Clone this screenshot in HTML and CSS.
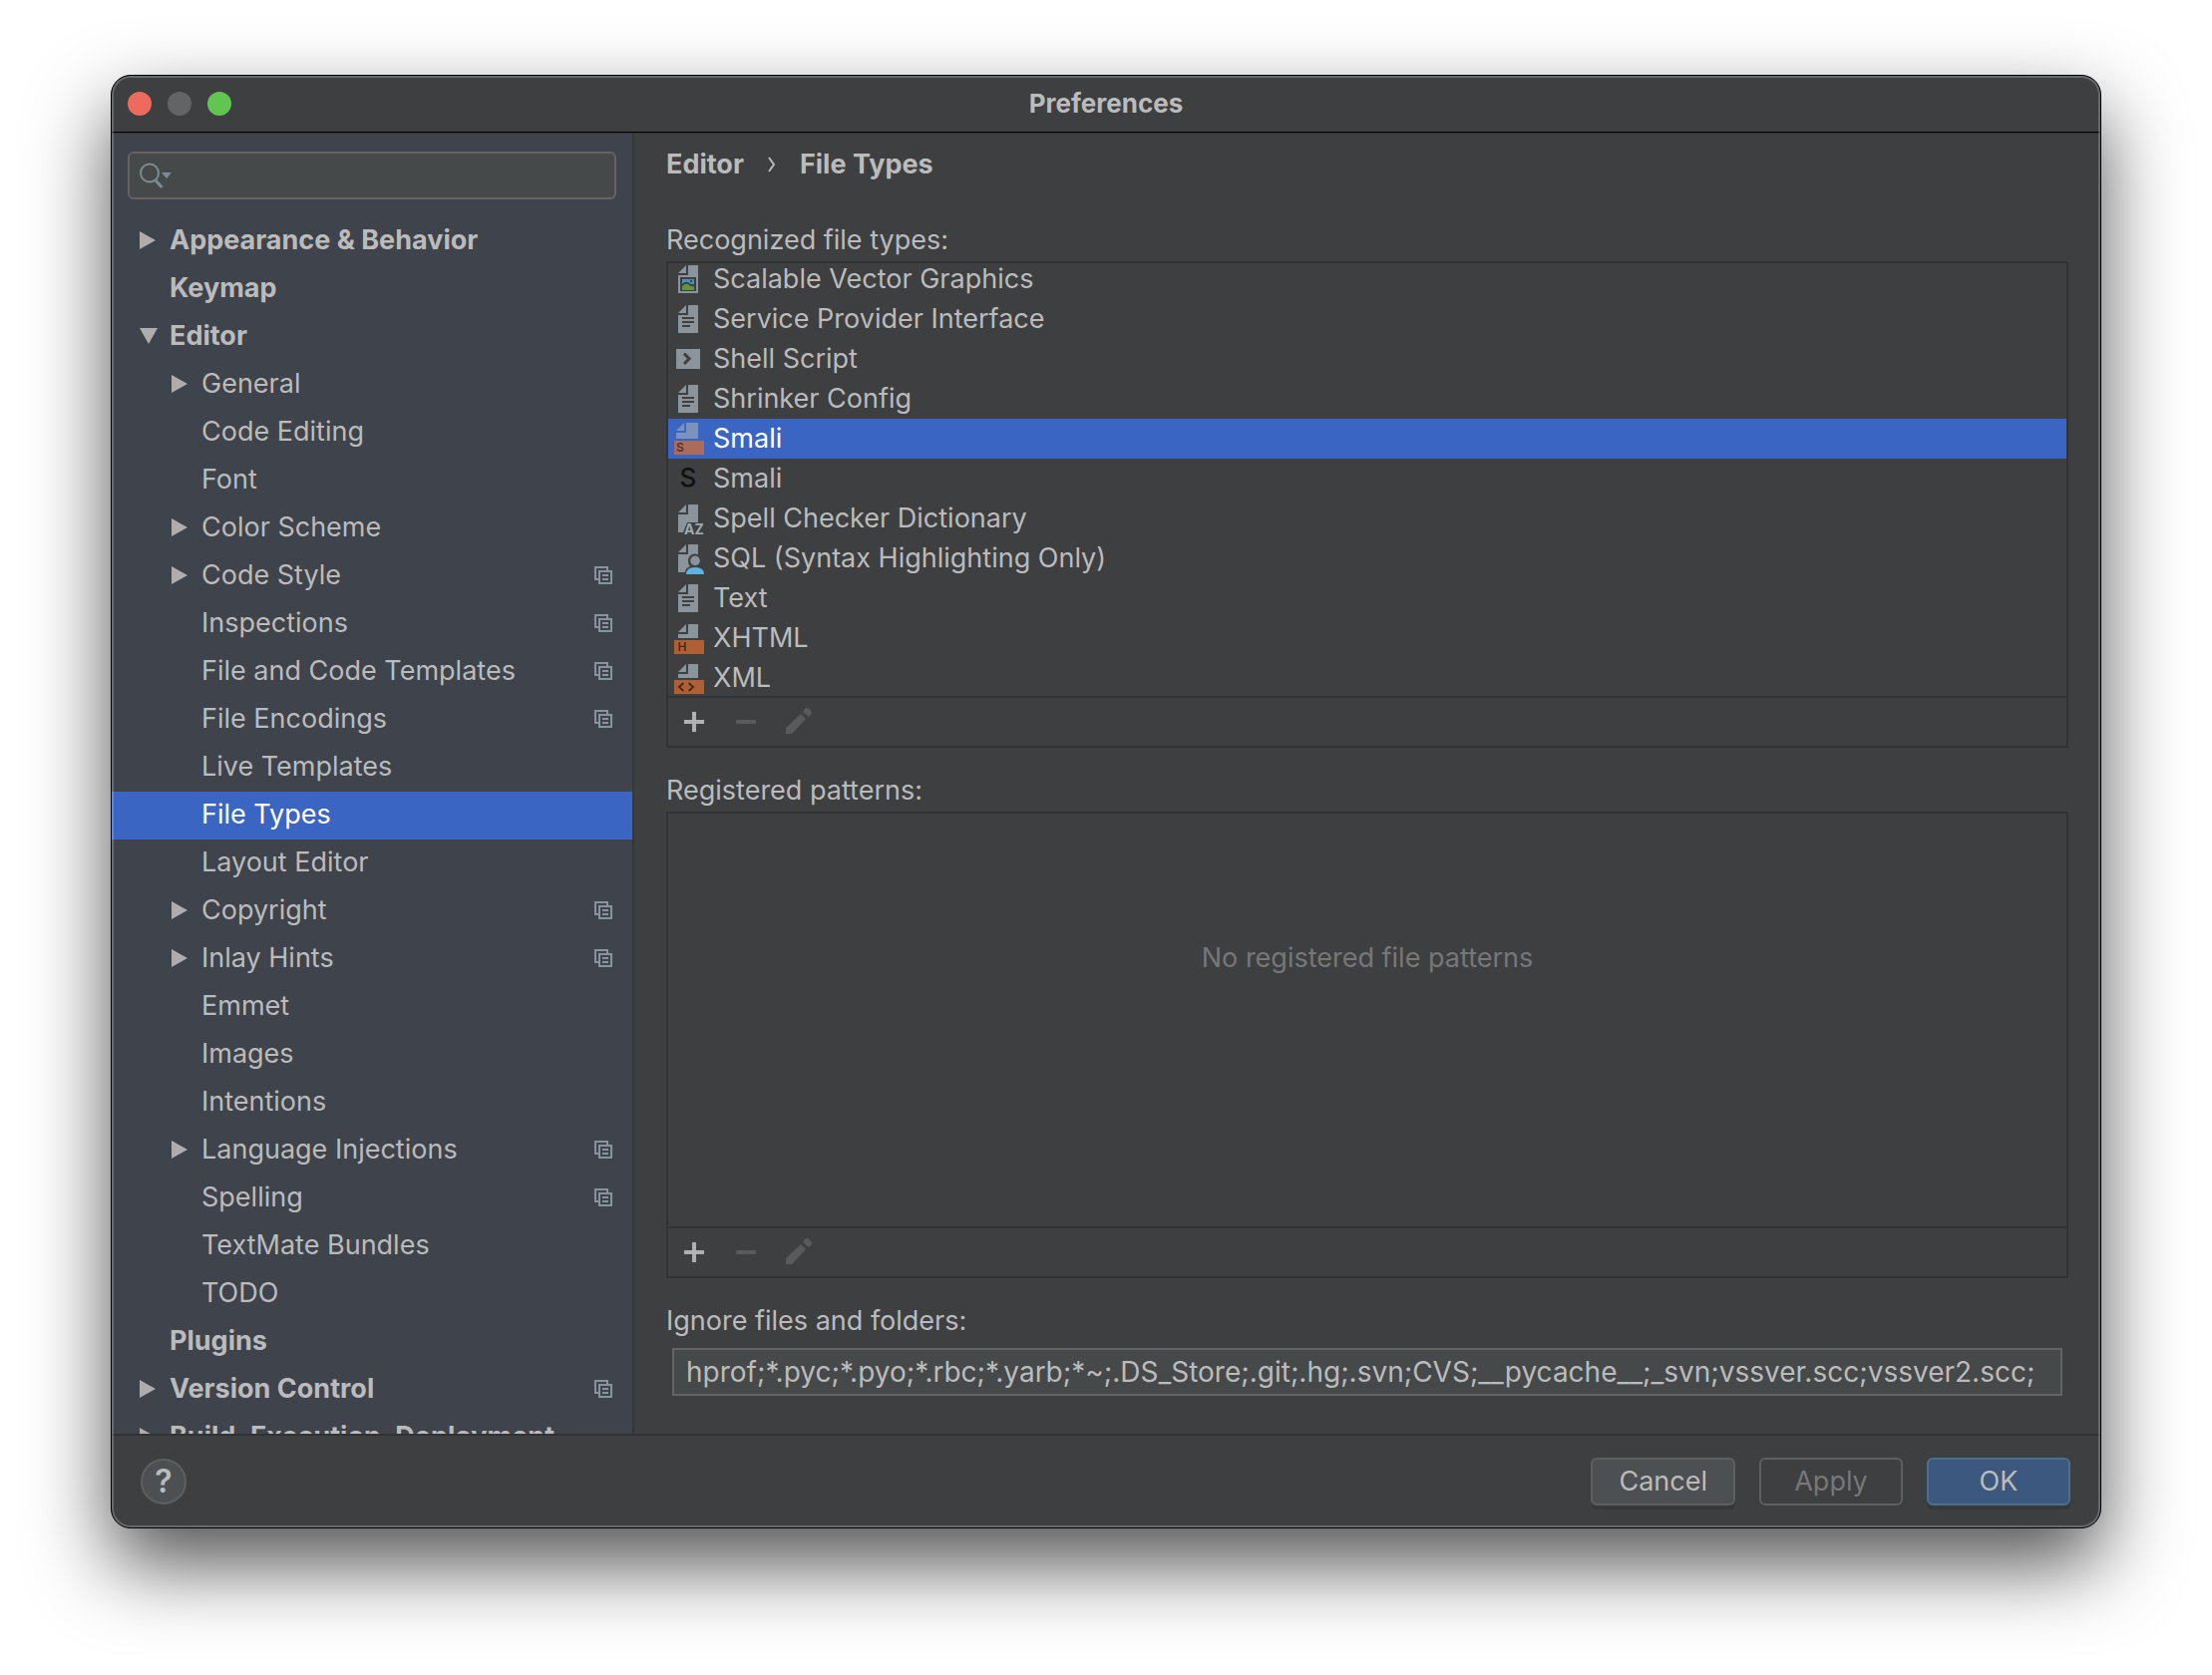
FILE: index.html
```html
<!DOCTYPE html>
<html lang="en">
<head>
<meta charset="utf-8">
<title>Preferences</title>
<link rel="stylesheet" href="styles.css">
</head>
<body>
<svg class="sprite" aria-hidden="true">
  <symbol id="right" viewBox="0 0 16 18"><path d="M0 0L16 9L0 18Z"/></symbol>
  <symbol id="down" viewBox="0 0 18 16"><path d="M0 0H18L9 16Z"/></symbol>
  <symbol id="project" viewBox="0 0 18 18"><path fill-rule="evenodd" d="M0 0H14V4H12V2H2V12H4V14H0ZM4 4H18V18H4ZM6 6V16H16V6ZM8 8H14V10H8ZM8 12H14V14H8Z"/></symbol>
  <symbol id="text" viewBox="0 0 16 16"><path fill-rule="evenodd" d="M7 1L3 5H7ZM8 1V6H3V15H13V1ZM5 7H11V8H5ZM5 9H11V10H5ZM5 11H9V12H5Z"/></symbol>
  <symbol id="half" viewBox="0 0 16 16"><path d="M7 1L3 5H7ZM8 1V6H3V8H13V1Z"/></symbol>
  <symbol id="plus" viewBox="0 0 32 32"><path d="M14 6H18V14H26V18H18V26H14V18H6V14H14Z"/></symbol>
  <symbol id="minus" viewBox="0 0 32 32"><path d="M6 14H26V18H6Z"/></symbol>
  <symbol id="pencil" viewBox="0 0 32 32"><path d="M4 22L19 8L24 13L10 28H4ZM21 6L23 3Q25 1 27 3L29 5Q31 7 29 9L27 11Z"/></symbol>
</svg>

<div class="window">
  <header class="titlebar">
    <div class="lights">
      <button class="light close" aria-label="Close"></button>
      <button class="light minimize" aria-label="Minimize" disabled></button>
      <button class="light zoom" aria-label="Zoom"></button>
    </div>
    <h1 class="title">Preferences</h1>
  </header>

  <div class="content">
    <aside class="sidebar">
      <label class="search">
        <svg class="search-icon" width="34" height="26" viewBox="0 0 34 26" aria-hidden="true"><circle cx="10" cy="10.500" r="9" fill="none" stroke="#7f8b91" stroke-width="2"/><path d="M16 18L22.500 25" stroke="#7f8b91" stroke-width="3"/><path d="M22 10H32L27 16Z" fill="#7f8b91"/></svg>
        <input type="search" aria-label="Search preferences">
      </label>
      <nav class="tree" aria-label="Preference pages">
        <a class="row top" href="#"><span class="arrow"><svg width="16" height="18"><use href="#right"/></svg></span>Appearance &amp; Behavior</a>
        <a class="row top" href="#"><span class="arrow"></span>Keymap</a>
        <a class="row top" href="#"><span class="arrow open"><svg width="18" height="16"><use href="#down"/></svg></span>Editor</a>
        <a class="row" href="#"><span class="arrow"><svg width="16" height="18"><use href="#right"/></svg></span>General</a>
        <a class="row" href="#"><span class="arrow"></span>Code Editing</a>
        <a class="row" href="#"><span class="arrow"></span>Font</a>
        <a class="row" href="#"><span class="arrow"><svg width="16" height="18"><use href="#right"/></svg></span>Color Scheme</a>
        <a class="row" href="#"><span class="arrow"><svg width="16" height="18"><use href="#right"/></svg></span>Code Style<svg class="project" width="18" height="18"><use href="#project"/></svg></a>
        <a class="row" href="#"><span class="arrow"></span>Inspections<svg class="project" width="18" height="18"><use href="#project"/></svg></a>
        <a class="row" href="#"><span class="arrow"></span>File and Code Templates<svg class="project" width="18" height="18"><use href="#project"/></svg></a>
        <a class="row" href="#"><span class="arrow"></span>File Encodings<svg class="project" width="18" height="18"><use href="#project"/></svg></a>
        <a class="row" href="#"><span class="arrow"></span>Live Templates</a>
        <a class="row selected" href="#" aria-current="page"><span class="arrow"></span>File Types</a>
        <a class="row" href="#"><span class="arrow"></span>Layout Editor</a>
        <a class="row" href="#"><span class="arrow"><svg width="16" height="18"><use href="#right"/></svg></span>Copyright<svg class="project" width="18" height="18"><use href="#project"/></svg></a>
        <a class="row" href="#"><span class="arrow"><svg width="16" height="18"><use href="#right"/></svg></span>Inlay Hints<svg class="project" width="18" height="18"><use href="#project"/></svg></a>
        <a class="row" href="#"><span class="arrow"></span>Emmet</a>
        <a class="row" href="#"><span class="arrow"></span>Images</a>
        <a class="row" href="#"><span class="arrow"></span>Intentions</a>
        <a class="row" href="#"><span class="arrow"><svg width="16" height="18"><use href="#right"/></svg></span>Language Injections<svg class="project" width="18" height="18"><use href="#project"/></svg></a>
        <a class="row" href="#"><span class="arrow"></span>Spelling<svg class="project" width="18" height="18"><use href="#project"/></svg></a>
        <a class="row" href="#"><span class="arrow"></span>TextMate Bundles</a>
        <a class="row" href="#"><span class="arrow"></span>TODO</a>
        <a class="row top" href="#"><span class="arrow"></span>Plugins</a>
        <a class="row top" href="#"><span class="arrow"><svg width="16" height="18"><use href="#right"/></svg></span>Version Control<svg class="project" width="18" height="18"><use href="#project"/></svg></a>
        <a class="row top" href="#"><span class="arrow"><svg width="16" height="18"><use href="#right"/></svg></span>Build, Execution, Deployment</a>
      </nav>
    </aside>

    <main class="page">
      <h2 class="breadcrumb"><span>Editor</span><svg width="8" height="16" viewBox="0 0 8 16" aria-hidden="true"><path d="M1 1L6 8L1 15" fill="none" stroke="#bbb" stroke-width="2"/></svg><span>File Types</span></h2>

      <h3 class="label">Recognized file types:</h3>
      <section class="panel">
        <div class="list">
          <ul class="types">
            <li><svg class="icon" viewBox="0 0 16 16"><path fill-rule="evenodd" d="M7 1L3 5H7ZM8 1V6H3V15H13V1ZM4 7H12V14H4Z"/><path fill="#4a8fb5" d="M5 8H11V13H5Z"/><path fill="#3d3f41" d="M5 10.500Q7 8.500 8.500 10Q10 11 11 10.500V12H5Z"/><path fill="#629440" d="M5 11.500Q7 9.500 8.500 11Q10 12 11 11.500V13.500H5Z"/><rect fill="#3d3f41" x="9" y="8.500" width="1" height="1"/></svg>Scalable Vector Graphics</li>
            <li><svg class="icon"><use href="#text"/></svg>Service Provider Interface</li>
            <li><svg class="icon" viewBox="0 0 16 16"><path d="M2 3H14V13H2Z"/><path d="M6 5.300L8.500 7.900L6 10.500" fill="none" stroke="#3d3f41" stroke-width="1.500"/></svg>Shell Script</li>
            <li><svg class="icon"><use href="#text"/></svg>Shrinker Config</li>
            <li class="selected"><svg class="icon" viewBox="0 0 16 16"><path fill="#7b93bc" d="M6 0L2 4H6ZM7 0V5H2V8H13V0Z"/><path fill="#ad6c5a" d="M1 9H16V16H1Z"/><text class="badge" x="2" y="14.700" fill="#4b3039">S</text></svg>Smali</li>
            <li><svg class="icon" viewBox="0 0 16 16"><text class="letter" x="8" y="12" fill="#111">S</text></svg>Smali</li>
            <li><svg class="icon" viewBox="0 0 16 16"><path d="M7 1L3 5H7ZM8 1V6H3V15H5.500L7.500 10H13V1Z"/><text class="az" x="6" y="16">AZ</text></svg>Spell Checker Dictionary</li>
            <li><svg class="icon" viewBox="0 0 16 16"><path d="M7 1L3 5H7ZM8 1V6H3V15H6.500Q6.500 13 9 12Q8 11 8 9.200A3.500 3.500 0 0 1 13 6.100V1Z"/><circle cx="11.500" cy="9.200" r="2.400"/><path fill="#5fb2de" d="M7 16Q7 12.500 11.500 12.500T16 16Z"/></svg>SQL (Syntax Highlighting Only)</li>
            <li><svg class="icon"><use href="#text"/></svg>Text</li>
            <li><svg class="icon" viewBox="0 0 16 16"><use href="#half"/><path fill="#b05f34" d="M1 9H16V16H1Z"/><text class="badge" x="2.700" y="14.700" fill="#432c22">H</text></svg>XHTML</li>
            <li><svg class="icon" viewBox="0 0 16 16"><use href="#half"/><path fill="#b05f34" d="M1 9H16V16H1Z"/><path d="M5.700 10.500L3.500 12.500L5.700 14.500M8.300 10.500L10.500 12.500L8.300 14.500" fill="none" stroke="#432c22"/></svg>XML</li>
          </ul>
        </div>
        <div class="tools">
          <button aria-label="Add file type"><svg width="32" height="32"><use href="#plus"/></svg></button>
          <button aria-label="Remove file type" disabled><svg width="32" height="32"><use href="#minus"/></svg></button>
          <button aria-label="Edit file type" disabled><svg width="32" height="32"><use href="#pencil"/></svg></button>
        </div>
      </section>

      <h3 class="label">Registered patterns:</h3>
      <section class="panel patterns">
        <p class="empty">No registered file patterns</p>
        <div class="tools">
          <button aria-label="Add pattern"><svg width="32" height="32"><use href="#plus"/></svg></button>
          <button aria-label="Remove pattern" disabled><svg width="32" height="32"><use href="#minus"/></svg></button>
          <button aria-label="Edit pattern" disabled><svg width="32" height="32"><use href="#pencil"/></svg></button>
        </div>
      </section>

      <label class="label" for="ignore">Ignore files and folders:</label>
      <input class="ignore" id="ignore" type="text" value="hprof;*.pyc;*.pyo;*.rbc;*.yarb;*~;.DS_Store;.git;.hg;.svn;CVS;__pycache__;_svn;vssver.scc;vssver2.scc;">
    </main>
  </div>

  <footer class="footer">
    <button class="help" aria-label="Help">?</button>
    <button class="button">Cancel</button>
    <button class="button" disabled>Apply</button>
    <button class="button primary">OK</button>
  </footer>
</div>
</body>
</html>
```
FILE: styles.css
```css
* {
  box-sizing: border-box;
}

body {
  margin: 0;
  height: 100vh;
  padding: 75px 111px 147px;
  background: #fff;
  color: #bbb;
  font: 27px/32px Inter, "Liberation Sans", sans-serif;
}

h1, h2, h3, p, ul {
  margin: 0;
  padding: 0;
  font-size: inherit;
  font-weight: inherit;
  list-style: none;
}

button, input {
  margin: 0;
  padding: 0;
  border: 0;
  background: none;
  color: inherit;
  font: inherit;
}

svg {
  flex: none;
  fill: currentColor;
}

.sprite {
  display: none;
}

.window {
  position: relative;
  display: flex;
  flex-direction: column;
  height: 100%;
  overflow: hidden;
  border: 1px solid #000;
  border-radius: 20px;
  background: #3d3f41;
  box-shadow: 0 36px 80px rgba(0, 0, 0, 0.68);
}

/* Light bevel that runs just inside the window frame */
.window::after {
  content: "";
  position: absolute;
  inset: 0;
  border: 2px solid rgba(255, 255, 255, 0.22);
  border-radius: 19px;
  pointer-events: none;
}

.titlebar {
  display: grid;
  grid-template-columns: 1fr auto 1fr;
  align-items: center;
  height: 57px;
  padding: 0 16px;
  border-bottom: 1px solid #000;
}

.lights {
  display: flex;
  gap: 16px;
}

.light {
  width: 24px;
  height: 24px;
  border-radius: 50%;
}

.close { background: #ed6a5e; }
.minimize { background: #636466; }
.zoom { background: #61c554; }

.title {
  font-size: 26px;
  font-weight: 700;
}

.content {
  display: flex;
  flex: 1;
  min-height: 0;
  border-top: 1px solid #313335;
}

.sidebar {
  display: flex;
  flex: none;
  flex-direction: column;
  width: 524px;
  padding-top: 18px;
  border-right: 2px solid #353638;
  background: #3e434c;
}

.search {
  display: flex;
  flex: none;
  align-items: center;
  height: 48px;
  margin: 0 16px 18px;
  padding: 0 10px;
  gap: 8px;
  border: 2px solid #646464;
  border-radius: 6px;
  background: #45494a;
}

.search input {
  flex: 1;
  min-width: 0;
  outline: 0;
}

.tree {
  flex: 1;
  min-height: 0;
  overflow: hidden;
}

.row {
  display: flex;
  align-items: center;
  height: 48px;
  padding: 0 20px 2px 60px;
  color: inherit;
  text-decoration: none;
}

.row.top {
  padding-left: 28px;
  font-weight: 700;
}

.row.selected {
  background: #3b65c3;
  color: #fff;
}

.arrow {
  display: flex;
  flex: none;
  width: 30px;
  color: #adadad;
}

.project {
  margin-left: auto;
  color: #87939a;
}

.page {
  display: flex;
  flex: 1;
  flex-direction: column;
  min-width: 0;
  padding: 15px 32px 38px;
}

.breadcrumb {
  display: flex;
  align-items: center;
  gap: 24px;
  margin-bottom: 44px;
  font-weight: 700;
}

.label {
  margin-bottom: 5px;
}

.panel {
  display: flex;
  flex: none;
  flex-direction: column;
  margin-bottom: 27px;
  border: 2px solid #323334;
}

.patterns {
  flex: 1;
}

/* The list is scrolled a little way past the top of its first row */
.list {
  height: 434px;
  overflow: hidden;
}

.types {
  margin-top: -4px;
}

.types li {
  display: flex;
  align-items: center;
  height: 40px;
  padding: 0 4px;
  gap: 9px;
}

.types .selected {
  background: #3b65c3;
  color: #fff;
}

.icon {
  width: 32px;
  height: 32px;
  color: #8b949b;
}

.badge {
  font-size: 6px;
  font-weight: 600;
}

.letter {
  font-size: 13px;
  font-weight: 500;
  text-anchor: middle;
}

.az {
  font-size: 7px;
  font-weight: 700;
  fill: #9aa9b2;
}

.tools {
  display: flex;
  height: 50px;
  border-top: 2px solid #323334;
}

.tools button {
  display: grid;
  place-items: center;
  width: 52px;
  height: 48px;
  color: #afb1b3;
}

.tools button:disabled {
  color: #5a5a5a;
}

.empty {
  flex: 1;
  padding-top: 129px;
  color: #777;
  text-align: center;
}

.ignore {
  height: 48px;
  margin: 6px 6px 0;
  padding: 0 12px;
  border: 2px solid #646464;
  background: #45494a;
  font-size: 28px;
}

.footer {
  display: flex;
  align-items: center;
  height: 94px;
  padding: 0 30px 0 29px;
  gap: 24px;
  border-top: 2px solid #313234;
}

.help {
  width: 46px;
  height: 46px;
  margin-right: auto;
  border: 2px solid #5e6060;
  border-radius: 50%;
  background: #4c5052;
  font-size: 32px;
  font-weight: 600;
}

.button {
  min-width: 144px;
  height: 48px;
  padding: 0 26px;
  border: 2px solid #5e6060;
  border-radius: 6px;
  background: #4c5052;
  box-shadow: 0 4px 0 rgba(0, 0, 0, 0.1);
}

.button:disabled {
  background: none;
  box-shadow: none;
  color: #777;
}

.button.primary {
  border-color: #4c708c;
  background: #3c587f;
}
```
